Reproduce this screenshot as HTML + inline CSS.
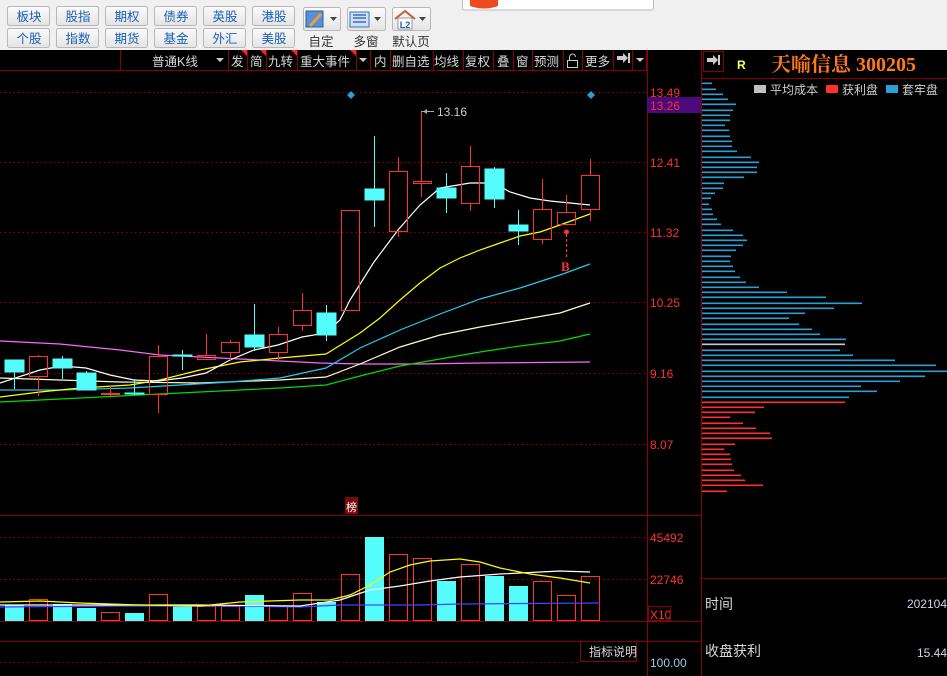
<!DOCTYPE html>
<html><head><meta charset="utf-8"><style>
html,body{margin:0;padding:0;background:#000;width:947px;height:676px;overflow:hidden}
svg{display:block}
text{font-family:"Liberation Sans","Noto Sans CJK SC",sans-serif}
</style></head><body>
<svg width="947" height="676" viewBox="0 0 947 676" xmlns="http://www.w3.org/2000/svg">
<defs>
<linearGradient id="bg" x1="0" y1="0" x2="0" y2="1"><stop offset="0" stop-color="#fbfbfb"/><stop offset="1" stop-color="#e4e4e4"/></linearGradient>
</defs>
<rect x="0" y="0" width="947" height="50" fill="#f0f0f0"/>
<g font-size="12.5" fill="#1a5fb4" text-anchor="middle">
<g stroke="#b8b8b8" fill="url(#bg)">
<rect x="7.5" y="6.5" width="42" height="19" rx="2"/><rect x="56.5" y="6.5" width="42" height="19" rx="2"/><rect x="105.5" y="6.5" width="42" height="19" rx="2"/><rect x="154.5" y="6.5" width="42" height="19" rx="2"/><rect x="203.5" y="6.5" width="42" height="19" rx="2"/><rect x="252.5" y="6.5" width="42" height="19" rx="2"/>
<rect x="7.5" y="28.5" width="42" height="19" rx="2"/><rect x="56.5" y="28.5" width="42" height="19" rx="2"/><rect x="105.5" y="28.5" width="42" height="19" rx="2"/><rect x="154.5" y="28.5" width="42" height="19" rx="2"/><rect x="203.5" y="28.5" width="42" height="19" rx="2"/><rect x="252.5" y="28.5" width="42" height="19" rx="2"/>
<rect x="303.5" y="7.5" width="37" height="23" rx="2"/><rect x="347.5" y="7.5" width="38" height="23" rx="2"/><rect x="392.5" y="7.5" width="38" height="23" rx="2"/>
</g>
<text x="29" y="21">板块</text><text x="78" y="21">股指</text><text x="127" y="21">期权</text><text x="176" y="21">债券</text><text x="225" y="21">英股</text><text x="274" y="21">港股</text>
<text x="29" y="43">个股</text><text x="78" y="43">指数</text><text x="127" y="43">期货</text><text x="176" y="43">基金</text><text x="225" y="43">外汇</text><text x="274" y="43">美股</text>
</g>
<rect x="306" y="11" width="17" height="16" fill="#5a8fd6" stroke="#2a5fa0"/><path d="M309 25 L320 13 L322 15 L311 27Z" fill="#f0a030"/>
<path d="M330 17 h7 l-3.5 4z" fill="#444"/>
<rect x="350" y="12" width="19" height="15" fill="#cfe0f7" stroke="#3a6fb8"/><path d="M353 15h13M353 18h13M353 22h13" stroke="#3a6fb8" stroke-width="1.5"/>
<path d="M374 17 h7 l-3.5 4z" fill="#444"/>
<path d="M395 19 L405 11 L415 19" fill="none" stroke="#c0603a" stroke-width="2"/><rect x="398" y="18" width="14" height="11" fill="#fff" stroke="#999"/><text x="405" y="28" font-size="9" font-weight="bold" fill="#1a5fb4" text-anchor="middle">L2</text>
<path d="M419 17 h7 l-3.5 4z" fill="#444"/>
<g font-size="12.5" fill="#333" text-anchor="middle"><text x="321" y="46">自定</text><text x="366" y="46">多窗</text><text x="411" y="46">默认页</text></g>
<rect x="462.5" y="-2" width="191" height="12" fill="#fff" stroke="#bbb" rx="2"/>
<path d="M470 0 h28 v6 q-14 5 -28 0z" fill="#ee4a1e"/>
<rect x="0" y="50" width="947" height="626" fill="#000"/>
<line x1="0" y1="70.5" x2="647" y2="70.5" stroke="#8b0000"/>
<g stroke="#8b0000"><line x1="120.5" y1="50" x2="120.5" y2="70"/><line x1="228.5" y1="50" x2="228.5" y2="70"/><line x1="247.5" y1="50" x2="247.5" y2="70"/><line x1="266.5" y1="50" x2="266.5" y2="70"/><line x1="297.5" y1="50" x2="297.5" y2="70"/><line x1="356.5" y1="50" x2="356.5" y2="70"/><line x1="370.5" y1="50" x2="370.5" y2="70"/><line x1="390.5" y1="50" x2="390.5" y2="70"/><line x1="433.5" y1="50" x2="433.5" y2="70"/><line x1="463.5" y1="50" x2="463.5" y2="70"/><line x1="493.5" y1="50" x2="493.5" y2="70"/><line x1="513.5" y1="50" x2="513.5" y2="70"/><line x1="532.5" y1="50" x2="532.5" y2="70"/><line x1="563.5" y1="50" x2="563.5" y2="70"/><line x1="582.5" y1="50" x2="582.5" y2="70"/><line x1="613.5" y1="50" x2="613.5" y2="70"/><line x1="632.5" y1="50" x2="632.5" y2="70"/><line x1="646.5" y1="50" x2="646.5" y2="70"/></g>
<g fill="#ff2020"><path d="M241 50h6v6z"/><path d="M260 50h6v6z"/><path d="M291 50h6v6z"/><path d="M350 50h6v6z"/></g>
<g font-size="12.5" fill="#d8d8d8"><text x="152" y="66">普通K线</text><text x="231" y="66">发</text><text x="250" y="66">简</text><text x="268" y="66">九转</text><text x="300" y="66">重大事件</text><text x="374" y="66">内</text><text x="392" y="66">删自选</text><text x="434" y="66">均线</text><text x="465" y="66">复权</text><text x="497" y="66">叠</text><text x="516" y="66">窗</text><text x="534" y="66">预测</text><text x="585" y="66">更多</text></g>
<g fill="#ccc"><path d="M216 58h8l-4 4z"/><path d="M359 58h8l-4 4z"/><path d="M636 58h8l-4 4z"/><path d="M617 56h6v-3l5 5-5 5v-3h-6z"/><rect x="628" y="53" width="2" height="10"/></g>
<rect x="567.5" y="60.5" width="10" height="7" fill="none" stroke="#ccc"/><path d="M569.5 60 v-3 a3 3 0 0 1 6 0" fill="none" stroke="#ccc"/>
<g stroke="#a00000" stroke-dasharray="1.5,3"><line x1="0" y1="92.5" x2="647" y2="92.5"/><line x1="0" y1="162.5" x2="647" y2="162.5"/><line x1="0" y1="232.5" x2="647" y2="232.5"/><line x1="0" y1="302.5" x2="647" y2="302.5"/><line x1="0" y1="373.5" x2="647" y2="373.5"/><line x1="0" y1="444.5" x2="647" y2="444.5"/><line x1="0" y1="537.5" x2="647" y2="537.5"/><line x1="0" y1="579.5" x2="647" y2="579.5"/><line x1="0" y1="662.5" x2="580" y2="662.5"/></g>
<g stroke="#8b0000"><line x1="647.5" y1="50" x2="647.5" y2="676"/><line x1="701.5" y1="50" x2="701.5" y2="676"/><line x1="0" y1="515.5" x2="701" y2="515.5"/><line x1="0" y1="621.5" x2="701" y2="621.5"/><line x1="0" y1="641.5" x2="701" y2="641.5"/><line x1="701" y1="578.5" x2="947" y2="578.5"/><line x1="701" y1="78.5" x2="947" y2="78.5"/></g>
<g font-size="12" fill="#ff3030"><text x="650" y="97">13.49</text><text x="650" y="167">12.41</text><text x="650" y="237">11.32</text><text x="650" y="307">10.25</text><text x="650" y="378">9.16</text><text x="650" y="449">8.07</text><text x="650" y="542">45492</text><text x="650" y="584">22746</text><text x="650" y="619">X10</text></g>
<rect x="647" y="97" width="54" height="16" fill="#4a0a7a"/><text x="650" y="110" font-size="12" fill="#ff3030">13.26</text>
<rect x="648.5" y="606.5" width="22" height="14" fill="none" stroke="#8b0000"/>
<text x="650" y="667" font-size="12" fill="#9cc8f0">100.00</text>
<rect x="580.5" y="641.5" width="56" height="20" fill="none" stroke="#8b0000"/><text x="589" y="656" font-size="12" fill="#d8d8d8">指标说明</text>
<rect x="345" y="497" width="13" height="17" fill="#7a0a0a"/><text x="346" y="511" font-size="11" fill="#fff">榜</text>
<path d="M351 91l4 4-4 4-4-4z" fill="#2a9fd6"/><path d="M591 91l4 4-4 4-4-4z" fill="#2a9fd6"/>
<g fill="none" stroke-width="1.2">
<polyline stroke="#ff66ff" points="0,341 60,344 120,350 160,355 200,357 260,360 320,363 360,364 420,364 480,363 590,362"/>
<polyline stroke="#00dd00" points="0,402 60,399 120,396 200,392 280,388 326,385 360,376 400,366 440,359 480,352 520,346 560,341 590,334"/>
<polyline stroke="#ffffc0" points="0,378 60,380 120,382 200,383 280,380 326,377 360,364 400,347 440,335 480,327 520,320 560,313 590,303"/>
<polyline stroke="#22ccee" points="0,390 60,390 130,388 180,385 230,382 280,378 326,368 360,348 400,330 440,314 480,299 520,288 560,275 590,264"/>
<polyline stroke="#ffff00" points="0,397 40,392 80,388 130,385 160,380 200,370 240,362 280,358 326,354 360,333 380,318 400,300 420,283 440,268 460,258 480,250 500,243 520,236 540,232 560,225 590,214"/>
<polyline stroke="#ffffff" points="0,383 40,370 62,366 86,368 110,375 134,380 158,381 182,378 206,373 230,360 254,350 278,345 302,337 326,333 340,320 350,300 374,262 398,230 420,205 440,188 470,183 494,183 510,192 530,198 550,201 570,203 590,205"/>
</g>
<g stroke-width="1">
<g stroke="#54fcfc" fill="#54fcfc">
<line x1="14.5" y1="360" x2="14.5" y2="389"/><rect x="5" y="360" width="19" height="12"/>
<line x1="62.5" y1="356" x2="62.5" y2="379"/><rect x="53" y="359" width="19" height="9"/>
<line x1="86.5" y1="371" x2="86.5" y2="390"/><rect x="77" y="373" width="19" height="17"/>
<line x1="134.5" y1="379" x2="134.5" y2="395"/><rect x="125" y="393" width="19" height="1"/>
<line x1="182.5" y1="350" x2="182.5" y2="370"/><rect x="173" y="355" width="19" height="1"/>
<line x1="254.5" y1="304" x2="254.5" y2="351"/><rect x="245" y="335" width="19" height="12"/>
<line x1="326.5" y1="305" x2="326.5" y2="341"/><rect x="317" y="313" width="19" height="22"/>
<line x1="374.5" y1="136" x2="374.5" y2="227"/><rect x="365" y="189" width="19" height="11"/>
<line x1="446.5" y1="173" x2="446.5" y2="213"/><rect x="437" y="188" width="19" height="10"/>
<line x1="494.5" y1="167" x2="494.5" y2="208"/><rect x="485" y="169" width="19" height="30"/>
<line x1="518.5" y1="210" x2="518.5" y2="245"/><rect x="509" y="225" width="19" height="6"/>
</g>
<g stroke="#ff3232" fill="none">
<line x1="38.5" y1="355" x2="38.5" y2="356"/><line x1="38.5" y1="377" x2="38.5" y2="396"/><rect x="29.5" y="356.5" width="18" height="20"/>
<line x1="110.5" y1="386" x2="110.5" y2="396"/><rect x="101.5" y="393.5" width="18" height="1"/>
<line x1="158.5" y1="345" x2="158.5" y2="356"/><line x1="158.5" y1="395" x2="158.5" y2="413"/><rect x="149.5" y="356.5" width="18" height="38"/>
<line x1="206.5" y1="334" x2="206.5" y2="355"/><rect x="197.5" y="355.5" width="18" height="4"/>
<line x1="230.5" y1="340" x2="230.5" y2="342"/><line x1="230.5" y1="352" x2="230.5" y2="361"/><rect x="221.5" y="342.5" width="18" height="10"/>
<line x1="278.5" y1="327" x2="278.5" y2="334"/><line x1="278.5" y1="352" x2="278.5" y2="360"/><rect x="269.5" y="334.5" width="18" height="18"/>
<line x1="302.5" y1="293" x2="302.5" y2="310"/><line x1="302.5" y1="325" x2="302.5" y2="331"/><rect x="293.5" y="310.5" width="18" height="15"/>
<rect x="341.5" y="210.5" width="18" height="100"/>
<line x1="398.5" y1="157" x2="398.5" y2="171"/><line x1="398.5" y1="231" x2="398.5" y2="237"/><rect x="389.5" y="171.5" width="18" height="60"/>
<line x1="421.5" y1="111" x2="421.5" y2="181"/><line x1="421.5" y1="183" x2="421.5" y2="197"/><rect x="413.5" y="181.5" width="18" height="2"/>
<line x1="470.5" y1="146" x2="470.5" y2="166"/><line x1="470.5" y1="203" x2="470.5" y2="211"/><rect x="461.5" y="166.5" width="18" height="37"/>
<line x1="542.5" y1="179" x2="542.5" y2="209"/><line x1="542.5" y1="239" x2="542.5" y2="244"/><rect x="533.5" y="209.5" width="18" height="30"/>
<line x1="566.5" y1="195" x2="566.5" y2="212"/><rect x="557.5" y="212.5" width="18" height="12"/>
<line x1="590.5" y1="159" x2="590.5" y2="175"/><line x1="590.5" y1="209" x2="590.5" y2="221"/><rect x="581.5" y="175.5" width="18" height="34"/>
</g>
</g>
<line x1="421" y1="111.5" x2="434" y2="111.5" stroke="#aaa"/><path d="M423 111.5l4-2.5v5z" fill="#aaa"/>
<text x="437" y="116" font-size="12" fill="#cfcfcf">13.16</text>
<circle cx="566.5" cy="232" r="2.5" fill="#ff3232"/><line x1="566.5" y1="234" x2="566.5" y2="258" stroke="#ff3232" stroke-dasharray="3,2"/>
<text x="561" y="271" font-size="13" font-weight="bold" fill="#ff3232" style="font-family:'Liberation Serif',serif">B</text>
<g fill="#54fcfc"><rect x="5" y="605" width="19" height="16"/><rect x="53" y="604" width="19" height="17"/><rect x="77" y="608" width="19" height="13"/><rect x="125" y="613" width="19" height="8"/><rect x="173" y="606" width="19" height="15"/><rect x="245" y="595" width="19" height="26"/><rect x="317" y="602" width="19" height="19"/><rect x="365" y="537" width="19" height="84"/><rect x="437" y="581" width="19" height="40"/><rect x="485" y="576" width="19" height="45"/><rect x="509" y="586" width="19" height="35"/></g>
<g fill="none" stroke="#ff3232"><rect x="29.5" y="599.5" width="18" height="21"/><rect x="101.5" y="612.5" width="18" height="8"/><rect x="149.5" y="594.5" width="18" height="26"/><rect x="197.5" y="606.5" width="18" height="14"/><rect x="221.5" y="606.5" width="18" height="14"/><rect x="269.5" y="606.5" width="18" height="14"/><rect x="293.5" y="593.5" width="18" height="27"/><rect x="341.5" y="574.5" width="18" height="46"/><rect x="389.5" y="554.5" width="18" height="66"/><rect x="413.5" y="558.5" width="18" height="62"/><rect x="461.5" y="564.5" width="18" height="56"/><rect x="533.5" y="581.5" width="18" height="39"/><rect x="557.5" y="595.5" width="18" height="25"/><rect x="581.5" y="576.5" width="18" height="44"/></g>
<g fill="none" stroke-width="1.2">
<polyline stroke="#4444ff" points="0,607 120,606 240,606 300,607 340,605 420,605 460,604 600,603"/>
<polyline stroke="#ffffff" points="0,605 200,605 300,606 340,600 370,590 400,586 430,581 460,577 500,574 540,572 560,571 590,572"/>
<polyline stroke="#ffff00" points="0,602 40,601 80,603 140,605 200,606 240,602 300,600 330,600 350,595 370,585 390,572 410,565 430,561 460,559 480,562 500,568 530,574 560,578 590,583"/>
</g>
<rect x="703.5" y="51.5" width="20" height="20" fill="none" stroke="#8b0000"/>
<path d="M707 58h6v-3l5 5-5 5v-3h-6z" fill="#ccc"/><rect x="718" y="55" width="2" height="10" fill="#ccc"/>
<text x="737" y="69" font-size="12" font-weight="bold" fill="#ffff66">R</text>
<text x="771" y="71" font-size="20" font-weight="bold" fill="#ff7a1a" style="font-family:'Liberation Serif','Noto Serif CJK SC',serif">天喻信息 300205</text>
<g font-size="12" fill="#cfcfcf"><rect x="754" y="85" width="12" height="8" fill="#c0c0c0"/><text x="770" y="94">平均成本</text><rect x="826" y="85" width="12" height="8" fill="#ff3030"/><text x="842" y="94">获利盘</text><rect x="886" y="85" width="12" height="8" fill="#2a9fd6"/><text x="902" y="94">套牢盘</text></g>
<g transform="translate(700,80) scale(0.3333)" stroke-width="5">
<g stroke="#2a9fd6">
<path d="M6 10H36M6 28H48M6 43H69M6 58H84M6 73H108M6 91H99M6 106H90M6 121H90M6 136H75M6 151H87M6 169H90M6 184H96M6 199H96M6 214H111M6 232H153M6 247H177M6 262H171M6 277H171M6 292H132M6 310H72M6 325H69M6 340H45M6 355H33M6 373H27M6 388H36M6 403H39M6 418H51M6 433H63M6 451H99M6 466H129M6 481H141M6 496H129M6 511H108M6 529H93M6 544H90M6 559H99M6 574H105M6 592H120M6 607H138M6 622H177M6 637H261M6 652H378M6 670H486M6 685H402M6 700H315M6 715H267M6 733H297M6 748H336M6 763H360M6 778H438M6 811H420M6 826H459M6 841H585M6 856H708M6 874H741M6 889H675M6 904H600M6 919H483M6 934H531M6 952H447"/>
</g>
<path d="M6 793H435" stroke="#c8c8c8"/>
<path stroke="#ff3030" d="M6 967H435M6 982H192M6 997H165M6 1012H90M6 1030H129M6 1045H168M6 1060H210M6 1075H216M6 1093H105M6 1108H72M6 1123H90M6 1138H93M6 1153H96M6 1171H102M6 1186H123M6 1201H135M6 1216H189M6 1234H81"/>
</g>
<g font-size="14" fill="#d8d8d8"><text x="705" y="609">时间</text><text x="705" y="656">收盘获利</text></g>
<g font-size="12" fill="#c8d8e8" text-anchor="end"><text x="947" y="608">202104</text><text x="947" y="657">15.44</text></g>
</svg>
</body></html>
